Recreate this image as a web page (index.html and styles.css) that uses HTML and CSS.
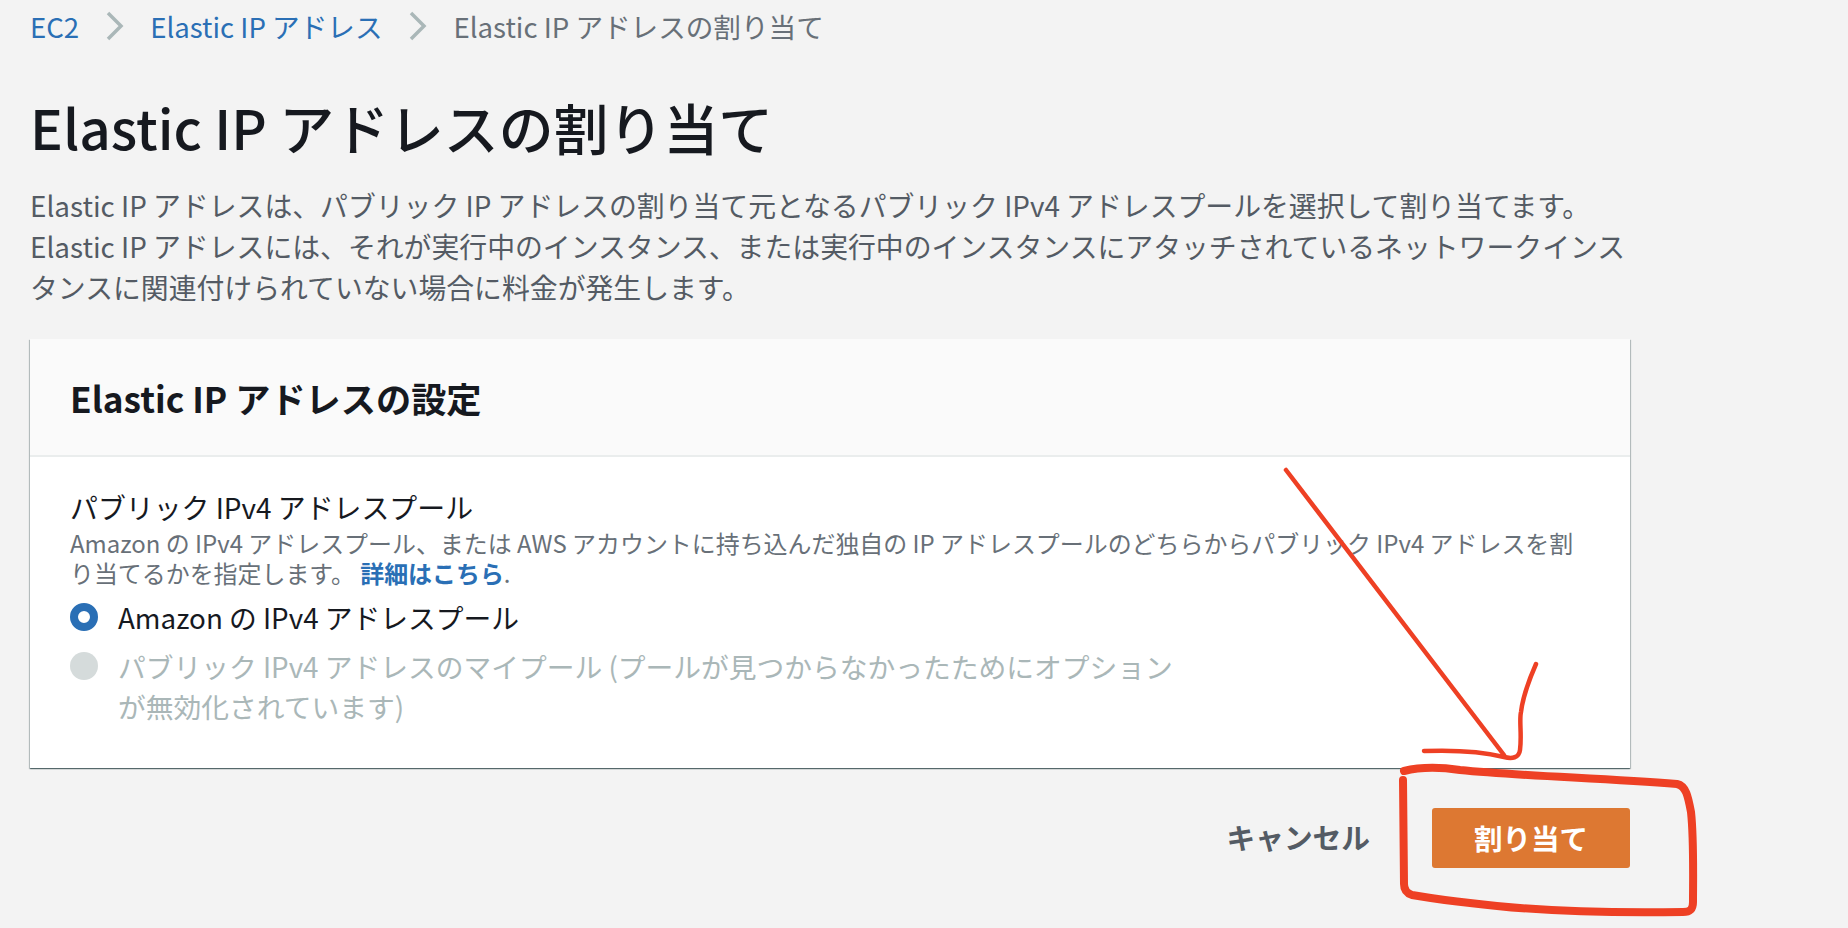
FILE: index.html
```html
<!DOCTYPE html>
<html lang="ja">
<head>
  <meta charset="UTF-8" />
  <title>Elastic IP アドレスの割り当て</title>
  <link rel="stylesheet" href="styles.css">
</head>
<body>
  <div class="container">
    <nav class="breadcrumbs">
      <a href="#">EC2</a>
      <svg class="crumb-sep" viewBox="0 0 20 30"><path d="M3 2 L16 15 L3 28" /></svg>
      <a href="#">Elastic IP アドレス</a>
      <svg class="crumb-sep" viewBox="0 0 20 30"><path d="M3 2 L16 15 L3 28" /></svg>
      <span>Elastic IP アドレスの割り当て</span>
    </nav>

    <h1>Elastic IP アドレスの割り当て</h1>
    <p class="intro">Elastic IP アドレスは、パブリック IP アドレスの割り当て元となるパブリック IPv4 アドレスプールを選択して割り当てます。<br>Elastic IP アドレスには、それが実行中のインスタンス、または実行中のインスタンスにアタッチされているネットワークインスタンスに関連付けられていない場合に料金が発生します。</p>

    <section class="card">
      <div class="card-header">
        <h2>Elastic IP アドレスの設定</h2>
      </div>
      <div class="card-body">
        <div class="field-label">パブリック IPv4 アドレスプール</div>
        <div class="field-desc">Amazon の IPv4 アドレスプール、または AWS アカウントに持ち込んだ独自の IP アドレスプールのどちらからパブリック IPv4 アドレスを割り当てるかを指定します。 <a href="#">詳細はこちら</a>.</div>
        <div class="radio-row">
          <span class="radio radio-on"></span>
          <span class="radio-text">Amazon の IPv4 アドレスプール</span>
        </div>
        <div class="radio-row radio-row-off">
          <span class="radio radio-off"></span>
          <span class="radio-text">パブリック IPv4 アドレスのマイプール (プールが見つからなかったためにオプションが無効化されています)</span>
        </div>
      </div>
    </section>

    <div class="actions">
      <button class="btn-cancel" type="button">キャンセル</button>
      <button class="btn-primary" type="button">割り当て</button>
    </div>
  </div>

  <!-- hand drawn red marks on top of the screenshot -->
  <svg class="scribble" viewBox="0 0 1848 928">
    <path class="thin" d="M1286 470 L1504 755" />
    <path class="thin" d="M1424 751 C1450 750 1480 751 1504 757 C1512 759 1519 758 1520 750 C1522 735 1519 720 1521 712 C1523 695 1529 680 1536 664" />
    <path class="thick" d="M1404 771 C1420 767 1440 767 1460 770 C1520 776 1600 778 1677 784 C1686 786 1688 796 1691 812 C1694 840 1693 880 1693 902 C1693 910 1690 912 1683 912 C1620 913 1540 912 1470 903 C1450 901 1430 898 1412 895 C1406 893 1404 889 1404 884 L1403 780" />
  </svg>
</body>
</html>
```

FILE: styles.css
```css
* {
  box-sizing: border-box;
}

html, body {
  height: 100%;
}

body {
  margin: 0;
  background-color: #f3f3f3;
  color: #16191f;
  font-family: "Noto Sans CJK JP", "Noto Sans", sans-serif;
  overflow: hidden;
  position: relative;
}

.container {
  width: 1630px;
  padding: 7px 0 0 30px;
}

.breadcrumbs {
  display: flex;
  align-items: center;
  gap: 25.5px;
  height: 38px;
  font-size: 27.6px;
  color: #687078;
}

.breadcrumbs a {
  color: #2a6fb5;
  text-decoration: none;
}

.crumb-sep {
  width: 20px;
  height: 30px;
  flex: none;
}

.crumb-sep path {
  fill: none;
  stroke: #aab7b8;
  stroke-width: 3.5;
}

h1 {
  margin: 44px 0 0;
  font-size: 54.9px;
  font-weight: 500;
  line-height: 74px;
}

.intro {
  margin: 22px 0 0;
  font-size: 27.85px;
  line-height: 41px;
  color: #545b64;
}

.card {
  margin-top: 31px;
  background-color: #fff;
  box-shadow: 0 1px 1px 0 rgba(0, 28, 36, 0.45), 1px 1px 1px 0 rgba(0, 28, 36, 0.2), -1px 1px 1px 0 rgba(0, 28, 36, 0.2);
}

.card-header {
  height: 118px;
  padding: 0 40px;
  display: flex;
  align-items: center;
  background-color: #fafafa;
  border-bottom: 2px solid #eaeded;
}

h2 {
  margin: 0;
  font-size: 35.2px;
  font-weight: 700;
}

.card-body {
  padding: 32px 40px 0;
  height: 311px;
}

.field-label {
  font-size: 27.9px;
  line-height: 36px;
}

.field-desc {
  margin-top: 3px;
  font-size: 23.95px;
  line-height: 29.5px;
  color: #687078;
}

.field-desc a {
  color: #2a6fb5;
  font-weight: 700;
  text-decoration: none;
}

.radio-row {
  display: flex;
  align-items: flex-start;
  gap: 20px;
  margin-top: 10px;
  font-size: 27.75px;
  line-height: 40px;
}

.radio-row-off {
  margin-top: 9px;
  color: #aab7b8;
}

.radio-text {
  width: 1060px;
}

.radio {
  flex: none;
  width: 28px;
  height: 28px;
  margin-top: 6px;
  border-radius: 50%;
}

.radio-on {
  background-color: #fff;
  border: 8px solid #2a6fb5;
}

.radio-off {
  background-color: #d5dbdb;
}

.actions {
  display: flex;
  justify-content: flex-end;
  align-items: center;
  gap: 62px;
  margin-top: 40px;
}

.btn-cancel {
  border: none;
  background: none;
  padding: 0 0 3px;
  font-family: inherit;
  font-size: 28.7px;
  font-weight: 700;
  color: #545b64;
}

.btn-primary {
  width: 198px;
  height: 60px;
  padding-bottom: 3px;
  border: none;
  border-radius: 3px;
  background-color: #dd7832;
  color: #fff;
  font-family: inherit;
  font-size: 28.5px;
  font-weight: 700;
}

.scribble {
  position: absolute;
  left: 0;
  top: 0;
  width: 1848px;
  height: 928px;
  pointer-events: none;
}

.scribble path {
  fill: none;
  stroke: #ee4024;
  stroke-linecap: round;
  stroke-linejoin: round;
}

.scribble .thin {
  stroke-width: 4.5;
}

.scribble .thick {
  stroke-width: 8;
}
```
